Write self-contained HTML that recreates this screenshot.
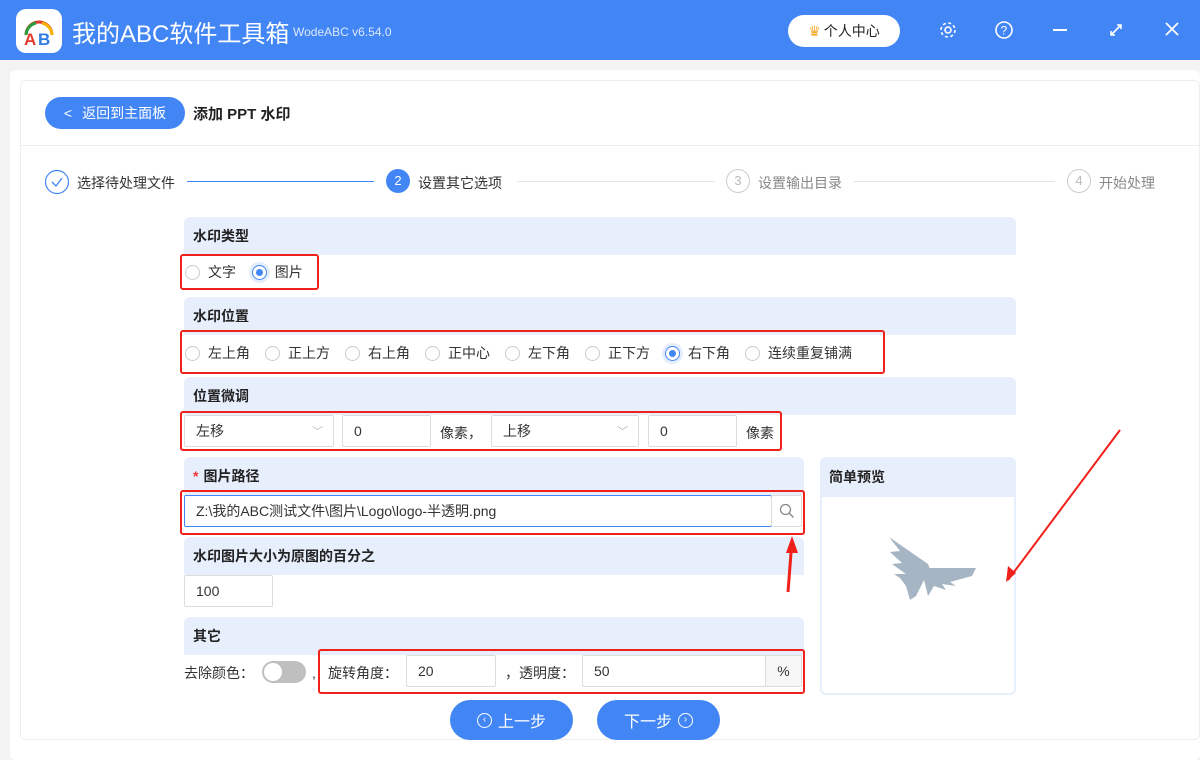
<!DOCTYPE html>
<html><head><meta charset="utf-8"><style>
*{box-sizing:border-box;margin:0;padding:0}
body{width:1200px;height:760px;overflow:hidden;background:#f3f3f3;font-family:"Liberation Sans","Noto Sans CJK SC",sans-serif;font-size:14px;color:#333;position:relative}
.a{position:absolute}
.top{left:0;top:0;width:1200px;height:60px;background:#4286f5}
.hdr{background:#e8effc;border-radius:6px 6px 0 0;font-weight:bold;font-size:14px;color:#222;padding-left:9px;display:flex;align-items:center}
.red{border:2.5px solid #f0201b;border-radius:3px}
.rad{display:inline-block;width:15px;height:15px;border:1px solid #ccc;border-radius:50%;vertical-align:middle;position:relative;background:#fff}
.rad.on{border-color:#4286f5;box-shadow:0 0 0 3px #e3edfd}
.rad.on:after{content:"";position:absolute;left:3px;top:3px;width:7px;height:7px;border-radius:50%;background:#4286f5}
.inp{border:1px solid #dcdcdc;background:#fff;border-radius:2px;display:flex;align-items:center;padding-left:11px;font-size:14px;color:#333}
.ri{display:flex;align-items:center;gap:8px;font-size:14px}
.btn{background:#4286f5;color:#fff;border-radius:20px;display:flex;align-items:center;justify-content:center;font-size:16px;gap:6px}
.cc{display:inline-block;width:15px;height:15px;border:1.5px solid #fff;border-radius:50%;font-size:10px;line-height:12px;text-align:center}
</style></head><body>
<div class="a top"></div>
<div class="a" style="left:16px;top:9px;width:46px;height:44px;background:#fff;border-radius:10px"><svg width="46" height="44"><path d="M10 26 A13 13 0 0 1 36 26" stroke="#e23a2e" stroke-width="3" fill="none"/><path d="M10 26 A13 13 0 0 1 20 14" stroke="#2a9d3e" stroke-width="3" fill="none"/><path d="M26 14 A13 13 0 0 1 36 26" stroke="#f5b400" stroke-width="3" fill="none"/><text x="8" y="36" font-size="17" font-weight="bold" fill="#e23a2e" font-family="Liberation Sans">A</text><text x="22" y="36" font-size="17" font-weight="bold" fill="#2f7de1" font-family="Liberation Sans">B</text></svg></div>
<div class="a" style="left:72px;top:14px;color:#fff;font-size:24px">我的ABC软件工具箱</div>
<div class="a" style="left:293px;top:25px;color:#dce8fd;font-size:12px">WodeABC v6.54.0</div>
<div class="a" style="left:788px;top:15px;width:112px;height:32px;background:#fff;border-radius:16px;display:flex;align-items:center;justify-content:center;font-size:14px;color:#222"><span style="color:#f5a623;margin-right:3px">♛</span>个人中心</div>
<svg class="a" style="left:938px;top:20px" width="20" height="20"><circle cx="10" cy="10" r="3" stroke="#fff" stroke-width="1.6" fill="none"/><circle cx="10" cy="10" r="7" stroke="#fff" stroke-width="1.6" fill="none" stroke-dasharray="3 2.5"/></svg>
<svg class="a" style="left:994px;top:20px" width="20" height="20"><circle cx="10" cy="10" r="8" stroke="#fff" stroke-width="1.6" fill="none"/><text x="6.5" y="14.5" fill="#fff" font-size="12" font-family="Liberation Sans">?</text></svg>
<div class="a" style="left:1053px;top:29px;width:14px;height:2px;background:#fff"></div>
<svg class="a" style="left:1108px;top:22px" width="16" height="16"><path d="M3 13L13 3M9 3h4v4M3 9v4h4" stroke="#fff" stroke-width="1.6" fill="none"/></svg>
<svg class="a" style="left:1164px;top:21px" width="16" height="16"><path d="M2 2L14 14M14 2L2 14" stroke="#fff" stroke-width="1.8"/></svg>

<div class="a" style="left:10px;top:70px;width:1190px;height:690px;background:#fff;border-radius:6px"></div>
<div class="a" style="left:20px;top:80px;width:1180px;height:660px;border:1px solid #eee;border-radius:6px"></div>
<div class="a" style="left:21px;top:145px;width:1178px;height:1px;background:#ececec"></div>
<div class="a btn" style="left:45px;top:97px;width:140px;height:32px;font-size:14px;gap:10px"><span>&lt;</span>返回到主面板</div>
<div class="a" style="left:193px;top:103px;font-size:15px;font-weight:bold;color:#222">添加 PPT 水印</div>

<svg class="a" style="left:44px;top:169px" width="26" height="26"><circle cx="13" cy="13" r="11.5" stroke="#4286f5" stroke-width="1.2" fill="#fff"/><path d="M8 13l4 4 6-8" stroke="#4286f5" stroke-width="1.3" fill="none"/></svg>
<div class="a" style="left:77px;top:173px;font-size:14px">选择待处理文件</div>
<div class="a" style="left:187px;top:181px;width:187px;height:1px;background:#4286f5"></div>
<div class="a" style="left:386px;top:169px;width:24px;height:24px;border-radius:50%;background:#4286f5;color:#fff;font-size:13px;text-align:center;line-height:24px">2</div>
<div class="a" style="left:418px;top:173px">设置其它选项</div>
<div class="a" style="left:517px;top:181px;width:198px;height:1px;background:#e5e5e5"></div>
<div class="a" style="left:726px;top:169px;width:24px;height:24px;border-radius:50%;border:1px solid #ccc;color:#bbb;font-size:13px;text-align:center;line-height:22px">3</div>
<div class="a" style="left:758px;top:173px;color:#888">设置输出目录</div>
<div class="a" style="left:854px;top:181px;width:201px;height:1px;background:#e5e5e5"></div>
<div class="a" style="left:1067px;top:169px;width:24px;height:24px;border-radius:50%;border:1px solid #ccc;color:#bbb;font-size:13px;text-align:center;line-height:22px">4</div>
<div class="a" style="left:1099px;top:173px;color:#888">开始处理</div>

<div class="a hdr" style="left:184px;top:217px;width:832px;height:38px">水印类型</div>
<div class="a red" style="left:180px;top:254px;width:139px;height:36px"></div>
<div class="a ri" style="left:185px;top:262px"><span class="rad"></span>文字&nbsp;&nbsp;<span class="rad on"></span>图片</div>

<div class="a hdr" style="left:184px;top:297px;width:832px;height:38px">水印位置</div>
<div class="a red" style="left:180px;top:330px;width:705px;height:44px"></div>
<div class="a ri" style="left:185px;top:343px;gap:0">
<span class="rad"></span><span style="margin:0 15px 0 8px">左上角</span><span class="rad"></span><span style="margin:0 15px 0 8px">正上方</span><span class="rad"></span><span style="margin:0 15px 0 8px">右上角</span><span class="rad"></span><span style="margin:0 15px 0 8px">正中心</span><span class="rad"></span><span style="margin:0 15px 0 8px">左下角</span><span class="rad"></span><span style="margin:0 15px 0 8px">正下方</span><span class="rad on"></span><span style="margin:0 15px 0 8px">右下角</span><span class="rad"></span><span style="margin:0 0 0 8px">连续重复铺满</span></div>

<div class="a hdr" style="left:184px;top:377px;width:832px;height:38px">位置微调</div>
<div class="a red" style="left:180px;top:411px;width:602px;height:40px"></div>
<div class="a inp" style="left:184px;top:415px;width:150px;height:32px">左移<span style="position:absolute;right:10px;color:#bbb;font-size:11px">﹀</span></div>
<div class="a inp" style="left:342px;top:415px;width:89px;height:32px">0</div>
<div class="a" style="left:440px;top:423px">像素，</div>
<div class="a inp" style="left:491px;top:415px;width:148px;height:32px">上移<span style="position:absolute;right:10px;color:#bbb;font-size:11px">﹀</span></div>
<div class="a inp" style="left:648px;top:415px;width:89px;height:32px">0</div>
<div class="a" style="left:746px;top:423px">像素</div>

<div class="a hdr" style="left:184px;top:457px;width:620px;height:38px"><span style="color:#e33;margin-right:5px">*</span>图片路径</div>
<div class="a red" style="left:180px;top:490px;width:625px;height:45px"></div>
<div class="a inp" style="left:184px;top:495px;width:588px;height:32px;border-color:#4286f5">Z:\我的ABC测试文件\图片\Logo\logo-半透明.png</div>
<div class="a inp" style="left:771px;top:495px;width:31px;height:32px;padding:0;justify-content:center"><svg width="16" height="16"><circle cx="6.5" cy="6.5" r="5" stroke="#888" stroke-width="1.3" fill="none"/><path d="M10 10l4.5 4.5" stroke="#888" stroke-width="1.4"/></svg></div>

<div class="a hdr" style="left:184px;top:537px;width:620px;height:38px">水印图片大小为原图的百分之</div>
<div class="a inp" style="left:184px;top:575px;width:89px;height:32px">100</div>

<div class="a hdr" style="left:184px;top:617px;width:620px;height:38px">其它</div>
<div class="a" style="left:184px;top:663px">去除颜色：</div>
<div class="a" style="left:262px;top:661px;width:44px;height:22px;border-radius:11px;background:#bfbfbf"><div style="position:absolute;left:2px;top:2px;width:18px;height:18px;border-radius:50%;background:#fff"></div></div>
<div class="a" style="left:312px;top:665px">,</div>
<div class="a red" style="left:318px;top:649px;width:487px;height:45px"></div>
<div class="a" style="left:328px;top:663px">旋转角度：</div>
<div class="a inp" style="left:406px;top:655px;width:90px;height:32px">20</div>
<div class="a" style="left:505px;top:663px">，透明度：</div>
<div class="a inp" style="left:582px;top:655px;width:184px;height:32px">50</div>
<div class="a inp" style="left:765px;top:655px;width:37px;height:32px;padding:0;justify-content:center;background:#f7f7f7">%</div>

<div class="a" style="left:820px;top:457px;width:196px;height:238px;border:2px solid #e8effc;border-radius:6px"></div>
<div class="a hdr" style="left:820px;top:457px;width:196px;height:40px">简单预览</div>
<svg class="a" style="left:880px;top:530px" width="100" height="75"><path d="M9 7L48 34 52 44 44 50 36 66 30 70 26 56 20 48 14 44 26 44 12 34 22 33 10 22 20 21Z" fill="#a6b5c4"/><path d="M44 38L96 38 92 46 70 52 76 56 62 54 66 60 54 56 48 66 44 50Z" fill="#a6b5c4"/></svg>

<svg class="a" style="left:770px;top:420px" width="360" height="180"><path d="M350 10L238 160" stroke="#f0201b" stroke-width="2"/><path d="M236 162l2-16 8 7z" fill="#f0201b"/><path d="M18 172L22 120" stroke="#f0201b" stroke-width="3"/><path d="M22 116l-6 17 12 0z" fill="#f0201b"/></svg>

<div class="a btn" style="left:450px;top:700px;width:123px;height:40px"><span class="cc">‹</span>上一步</div>
<div class="a btn" style="left:597px;top:700px;width:123px;height:40px">下一步<span class="cc">›</span></div>
</body></html>
